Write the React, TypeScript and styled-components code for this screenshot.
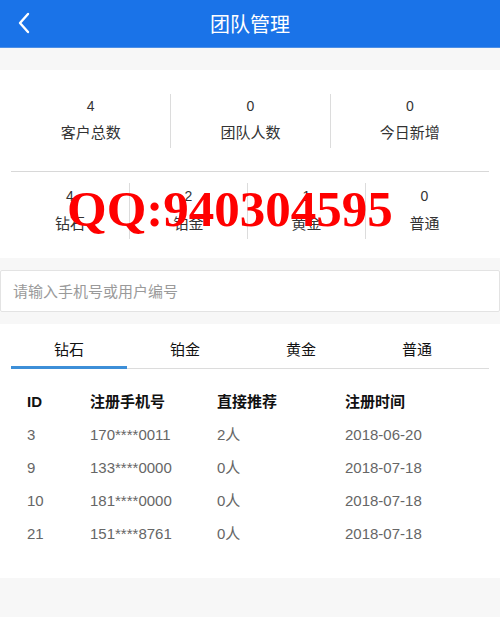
import React from 'react';
import styled, { createGlobalStyle } from 'styled-components';

const GlobalStyle = createGlobalStyle`
  body {
    margin: 0;
    background: #f7f7f7;
    font-family: "Liberation Sans", "Noto Sans CJK SC", sans-serif;
  }
`;

const Page = styled.div`
  position: relative;
  width: 500px;
  min-height: 617px;
  background: #f7f7f7;
`;

const Header = styled.header`
  height: 47px;
  background: #1a73e8;
  border-bottom: 1px solid #4d8fe6;
  display: flex;
  align-items: center;
  justify-content: center;
  position: relative;
  color: #fff;
  font-size: 20px;
`;

const BackButton = styled.span`
  position: absolute;
  left: 16px;
  top: 12px;
  width: 16px;
  height: 22px;
  display: flex;
`;

const StatsPanel = styled.section`
  margin-top: 22px;
  background: #fff;
  padding-top: 24px;
  padding-bottom: 19px;
`;

const StatRow = styled.div<{ $cols: number; $right: number }>`
  display: grid;
  grid-template-columns: repeat(${(p) => p.$cols}, 1fr);
  padding: 0 ${(p) => p.$right}px 0 11px;
`;

const StatCell = styled.div<{ $first: boolean; $numLine: number; $labelLine: number }>`
  display: flex;
  flex-direction: column;
  align-items: center;
  border-left: ${(p) => (p.$first ? 'none' : '1px solid #dcdcdc')};
  color: #333;

  & > b {
    font-weight: normal;
    font-size: 14px;
    line-height: ${(p) => p.$numLine}px;
  }
  & > span {
    font-size: 15px;
    line-height: ${(p) => p.$labelLine}px;
  }
`;

const Divider = styled.hr`
  margin: 23px 11px 11px;
  border: none;
  border-top: 1px solid #d8d8d8;
`;

const SearchBox = styled.input`
  display: block;
  box-sizing: border-box;
  margin: 12px 0 0;
  width: 500px;
  height: 42px;
  border: 1px solid #e3e3e3;
  border-radius: 2px;
  background: #fff;
  padding: 0 12px;
  font-family: inherit;
  font-size: 15px;
  color: #333;
  outline: none;

  &::placeholder {
    color: #9a9a9a;
  }
`;

const ListPanel = styled.section`
  margin-top: 12px;
  background: #fff;
  padding: 0 11px 28px;
`;

const Tabs = styled.div`
  display: flex;
  height: 44px;
  border-bottom: 1px solid #dcdcdc;
`;

const Tab = styled.div<{ $active: boolean }>`
  width: 116px;
  display: flex;
  align-items: center;
  justify-content: center;
  font-size: 15px;
  color: #111;
  box-sizing: border-box;
  margin-bottom: -1px;
  border-bottom: 3px solid ${(p) => (p.$active ? '#3d8fd8' : 'transparent')};
  padding-top: 6px;
`;

const Table = styled.div`
  padding: 16px 0 0 16px;
`;

const Row = styled.div<{ $head?: boolean }>`
  display: grid;
  grid-template-columns: 63px 127px 128px 1fr;
  line-height: 33px;
  font-size: 15px;
  color: ${(p) => (p.$head ? '#111' : '#666')};
  font-weight: ${(p) => (p.$head ? 'bold' : 'normal')};
`;

const Watermark = styled.div`
  position: absolute;
  left: 67px;
  top: 181px;
  font-family: "Liberation Serif", serif;
  font-weight: bold;
  font-size: 51px;
  line-height: 56px;
  color: #ff0000;
  pointer-events: none;
  white-space: nowrap;
`;

const topStats = [
  { value: 4, label: '客户总数' },
  { value: 0, label: '团队人数' },
  { value: 0, label: '今日新增' },
];

const levelStats = [
  { value: 4, label: '钻石' },
  { value: 2, label: '铂金' },
  { value: 1, label: '黄金' },
  { value: 0, label: '普通' },
];

const members = [
  { id: 3, phone: '170****0011', refer: '2人', date: '2018-06-20' },
  { id: 9, phone: '133****0000', refer: '0人', date: '2018-07-18' },
  { id: 10, phone: '181****0000', refer: '0人', date: '2018-07-18' },
  { id: 21, phone: '151****8761', refer: '0人', date: '2018-07-18' },
];

export default function App() {
  return (
    <Page>
      <GlobalStyle />
      <Header>
        <BackButton>
          <svg width="16" height="22" viewBox="0 0 16 22">
            <path d="M12 2 L4 11 L12 20" fill="none" stroke="#fff" strokeWidth="2.4" strokeLinecap="round" strokeLinejoin="round" />
          </svg>
        </BackButton>
        团队管理
      </Header>

      <StatsPanel>
        <StatRow $cols={3} $right={11}>
          {topStats.map((s, i) => (
            <StatCell key={s.label} $first={i === 0} $numLine={24} $labelLine={30}>
              <b>{s.value}</b>
              <span>{s.label}</span>
            </StatCell>
          ))}
        </StatRow>
        <Divider />
        <StatRow $cols={4} $right={17}>
          {levelStats.map((s, i) => (
            <StatCell key={s.label} $first={i === 0} $numLine={26} $labelLine={30}>
              <b>{s.value}</b>
              <span>{s.label}</span>
            </StatCell>
          ))}
        </StatRow>
      </StatsPanel>

      <SearchBox placeholder="请输入手机号或用户编号" />

      <ListPanel>
        <Tabs>
          {levelStats.map((s, i) => (
            <Tab key={s.label} $active={i === 0}>
              {s.label}
            </Tab>
          ))}
        </Tabs>
        <Table>
          <Row $head>
            <span>ID</span>
            <span>注册手机号</span>
            <span>直接推荐</span>
            <span>注册时间</span>
          </Row>
          {members.map((m) => (
            <Row key={m.id}>
              <span>{m.id}</span>
              <span>{m.phone}</span>
              <span>{m.refer}</span>
              <span>{m.date}</span>
            </Row>
          ))}
        </Table>
      </ListPanel>

      <Watermark>QQ:940304595</Watermark>
    </Page>
  );
}
